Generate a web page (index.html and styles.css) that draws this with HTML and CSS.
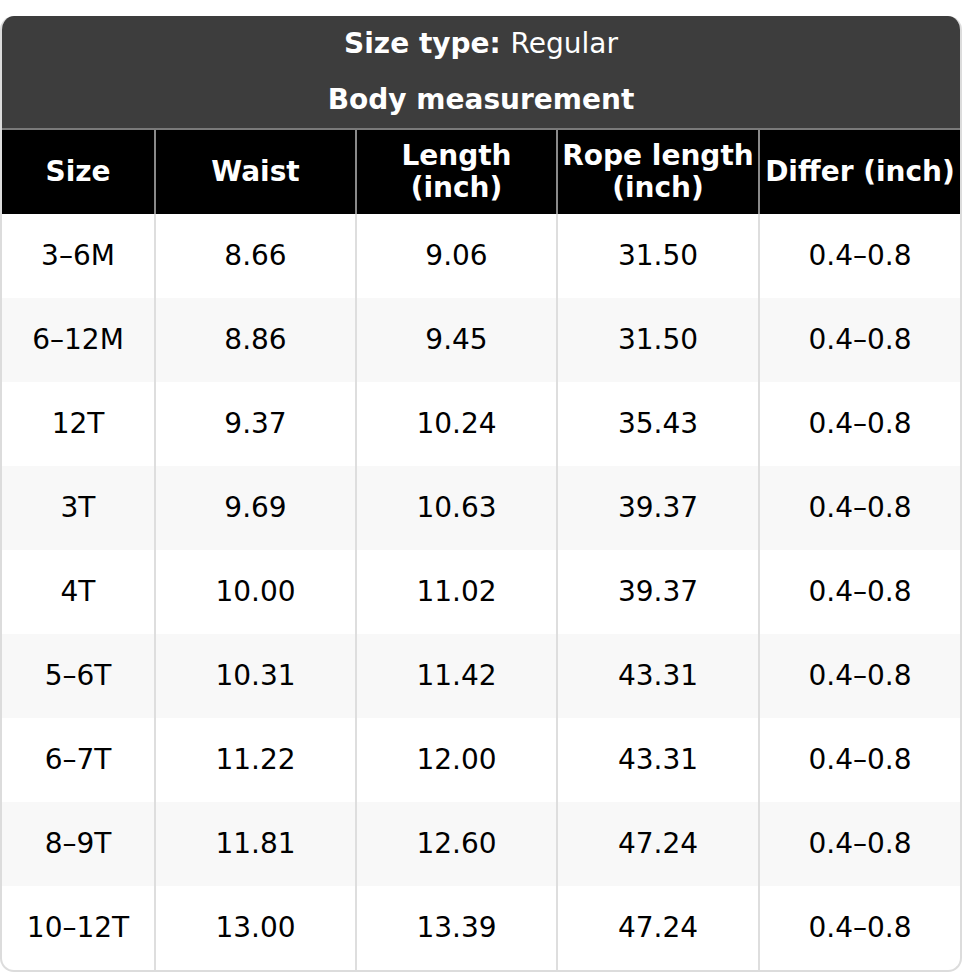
FILE: index.html
```html
<!DOCTYPE html>
<html>
<head>
<meta charset="utf-8">
<link rel="stylesheet" href="styles.css">
</head>
<body>
<div class="chart">
  <table class="size-table">
    <colgroup>
      <col class="c1"><col class="c2"><col class="c3"><col class="c4"><col class="c5">
    </colgroup>
    <thead>
      <tr class="title-row"><th colspan="5"><strong>Size type:</strong> <span class="normal">Regular</span></th></tr>
      <tr class="title-row"><th colspan="5">Body measurement</th></tr>
      <tr class="col-head">
        <th>Size</th>
        <th>Waist</th>
        <th>Length<br>(inch)</th>
        <th>Rope length<br>(inch)</th>
        <th>Differ (inch)</th>
      </tr>
    </thead>
    <tbody>
      <tr><td>3–6M</td><td>8.66</td><td>9.06</td><td>31.50</td><td>0.4–0.8</td></tr>
      <tr><td>6–12M</td><td>8.86</td><td>9.45</td><td>31.50</td><td>0.4–0.8</td></tr>
      <tr><td>12T</td><td>9.37</td><td>10.24</td><td>35.43</td><td>0.4–0.8</td></tr>
      <tr><td>3T</td><td>9.69</td><td>10.63</td><td>39.37</td><td>0.4–0.8</td></tr>
      <tr><td>4T</td><td>10.00</td><td>11.02</td><td>39.37</td><td>0.4–0.8</td></tr>
      <tr><td>5–6T</td><td>10.31</td><td>11.42</td><td>43.31</td><td>0.4–0.8</td></tr>
      <tr><td>6–7T</td><td>11.22</td><td>12.00</td><td>43.31</td><td>0.4–0.8</td></tr>
      <tr><td>8–9T</td><td>11.81</td><td>12.60</td><td>47.24</td><td>0.4–0.8</td></tr>
      <tr><td>10–12T</td><td>13.00</td><td>13.39</td><td>47.24</td><td>0.4–0.8</td></tr>
    </tbody>
  </table>
</div>
</body>
</html>
```

FILE: styles.css
```css
html, body {
  margin: 0;
  padding: 0;
  background: #ffffff;
}
body {
  padding-top: 16px;
  font-family: "DejaVu Sans", sans-serif;
  color: #000;
}
.chart {
  width: 962px;
  box-sizing: border-box;
  border: 2px solid #dcdcdc;
  border-top: none;
  border-radius: 14px;
  overflow: hidden;
}
.size-table {
  width: 100%;
  border-collapse: collapse;
  table-layout: fixed;
  font-size: 28px;
}
.c1 { width: 153px; }
.c2 { width: 201px; }
.c3 { width: 201px; }
.c4 { width: 202px; }
.c5 { width: 201px; }

.title-row th {
  background: #3d3d3d;
  color: #fff;
  height: 56px;
  padding: 0;
  font-weight: bold;
  line-height: 32px;
}
.title-row .normal { font-weight: normal; }
.col-head th {
  background: #000;
  color: #fff;
  height: 84px;
  padding: 0;
  line-height: 32px;
  font-weight: bold;
  border-top: 2px solid #7a7a7a;
  border-left: 2px solid #8a8a8a;
}
.col-head th:first-child { border-left: none; }
.size-table td {
  height: 84px;
  padding: 0;
  text-align: center;
  border-left: 2px solid #dedede;
  line-height: 32px;
}
.size-table td:first-child { border-left: none; }
.size-table tbody tr:nth-child(even) td { background: #f8f8f8; }
```
